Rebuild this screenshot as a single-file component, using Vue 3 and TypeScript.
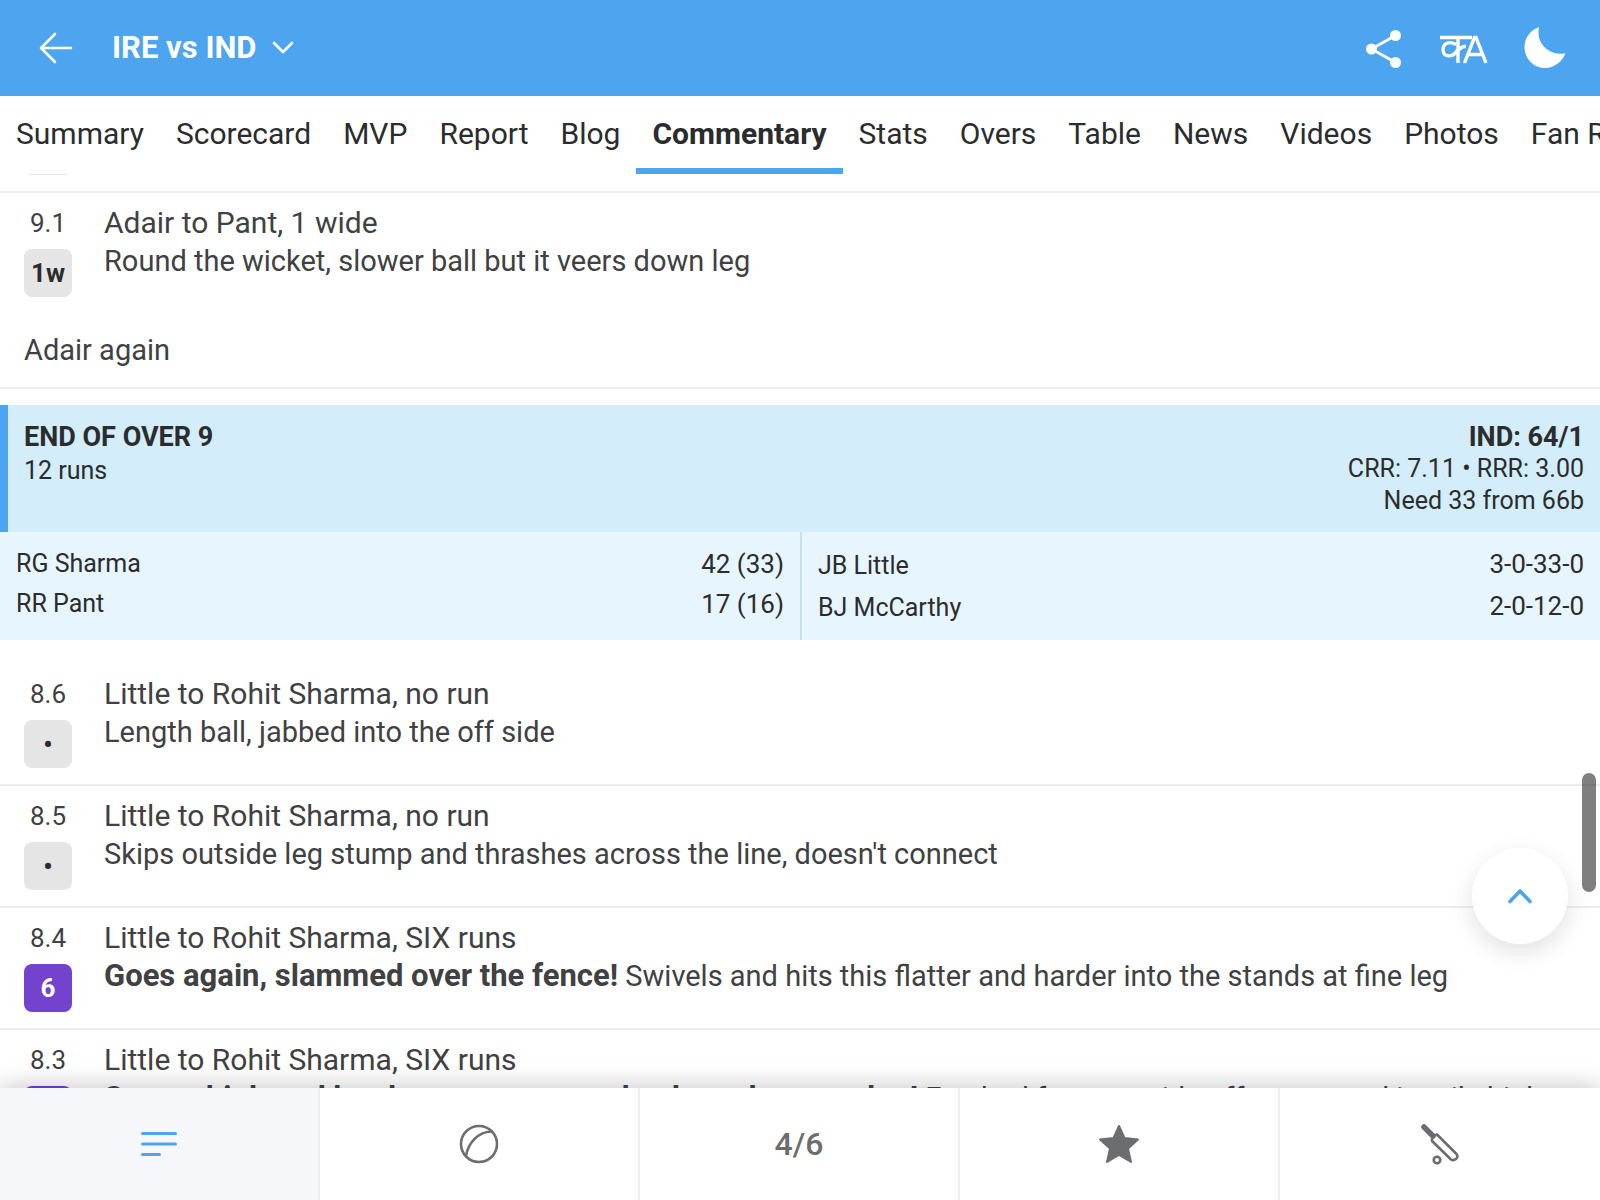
<script setup lang="ts">
import { ref } from 'vue'

interface Delivery {
  over: string
  label: string
  kind: 'plain' | 'six'
  title: string
  lead?: string
  text: string
  note?: string
}

const tabs: string[] = [
  'Summary', 'Scorecard', 'MVP', 'Report', 'Blog', 'Commentary', 'Stats',
  'Overs', 'Table', 'News', 'Videos', 'Photos', 'Fan Ratings',
]
const activeTab = ref('Commentary')

const currentOver: Delivery[] = [
  {
    over: '9.1', label: '1w', kind: 'plain', title: 'Adair to Pant, 1 wide',
    text: 'Round the wicket, slower ball but it veers down leg', note: 'Adair again',
  },
]

const previousOver: Delivery[] = [
  { over: '8.6', label: '•', kind: 'plain', title: 'Little to Rohit Sharma, no run', text: 'Length ball, jabbed into the off side' },
  { over: '8.5', label: '•', kind: 'plain', title: 'Little to Rohit Sharma, no run', text: "Skips outside leg stump and thrashes across the line, doesn't connect" },
  {
    over: '8.4', label: '6', kind: 'six', title: 'Little to Rohit Sharma, SIX runs',
    lead: 'Goes again, slammed over the fence!', text: 'Swivels and hits this flatter and harder into the stands at fine leg',
  },
  {
    over: '8.3', label: '6', kind: 'six', title: 'Little to Rohit Sharma, SIX runs',
    lead: 'Swung high and hard, no sweeper on backward square leg!', text: 'Fetched from outside off stump and it sails high',
  },
]

const batters = [
  { name: 'RG Sharma', figures: '42 (33)' },
  { name: 'RR Pant', figures: '17 (16)' },
]
const bowlers = [
  { name: 'JB Little', figures: '3-0-33-0' },
  { name: 'BJ McCarthy', figures: '2-0-12-0' },
]

const feed = ref<HTMLElement | null>(null)

function toTop(): void {
  feed.value?.scrollTo({ top: 0, behavior: 'smooth' })
}
</script>

<template>
  <div class="app">
    <header class="bar">
      <button class="icon-btn back" aria-label="Back">
        <svg width="34" height="32" viewBox="0 0 34 32" fill="none" stroke="currentColor" stroke-width="2.6" stroke-linecap="round" stroke-linejoin="round">
          <path d="M32 16H2M16 2 2 16l14 14" />
        </svg>
      </button>
      <button class="match">
        <span>IRE vs IND</span>
        <svg width="22" height="14" viewBox="0 0 22 14" fill="none" stroke="currentColor" stroke-width="2.6" stroke-linecap="round" stroke-linejoin="round">
          <path d="m2 2 9 9 9-9" />
        </svg>
      </button>
      <div class="actions">
        <button class="icon-btn" aria-label="Share">
          <svg width="38" height="40" viewBox="0 0 38 40" fill="currentColor">
            <path d="M29.500 7.500 5.500 21l24 13.500" fill="none" stroke="currentColor" stroke-width="2.800" />
            <circle cx="29.500" cy="7.500" r="5.500" /><circle cx="5.500" cy="21" r="5.500" /><circle cx="29.500" cy="34.500" r="5.500" />
          </svg>
        </button>
        <button class="icon-btn" aria-label="Language">
          <svg width="50" height="32" viewBox="0 0 50 32" fill="none" stroke="currentColor" stroke-width="3.400">
            <path d="M1 5.500h32M19 5.500V31M17 12.500c-7-4-13-1-13 5.500 0 8 11 8 15-1M19 19c2-3 4-5 8-4.500" />
            <path d="M25.500 31 35.500 5.500h1.500L47 31M29 22.500h15" />
          </svg>
        </button>
        <button class="icon-btn" aria-label="Dark mode">
          <svg width="42" height="42" viewBox="0 0 42 42" fill="currentColor">
            <path d="M15 .3C6 3.200.500 11 .500 20.500A20.500 20.500 0 0 0 21 41c9 0 17.500-6 20.300-14.700C26 29.500 11.500 17 15 .300z" />
          </svg>
        </button>
      </div>
    </header>

    <nav class="tabs" aria-label="Match sections">
      <a v-for="tab in tabs" :key="tab" href="#" :class="{ active: tab === activeTab }" @click.prevent="activeTab = tab">{{ tab }}</a>
    </nav>

    <main class="stage">
      <div ref="feed" class="feed">
        <div class="passed"><span class="badge plain"></span></div>
        <template v-for="ball in currentOver" :key="ball.over">
          <article class="ball" :class="{ noted: ball.note }">
            <div class="side">
              <span class="over">{{ ball.over }}</span>
              <span class="badge" :class="ball.kind">{{ ball.label }}</span>
            </div>
            <div class="text">
              <p>{{ ball.title }}</p>
              <p class="detail">{{ ball.text }}</p>
            </div>
          </article>
          <p v-if="ball.note" class="note detail">{{ ball.note }}</p>
        </template>

        <section class="over-end">
          <div class="over-head">
            <div>
              <h2>END OF OVER 9</h2>
              <p>12 runs</p>
            </div>
            <div class="score">
              <p class="total">IND: 64/1</p>
              <p>CRR: 7.11 • RRR: 3.00</p>
              <p>Need 33 from 66b</p>
            </div>
          </div>
          <div class="over-body">
            <table class="batting">
              <tbody>
                <tr v-for="b in batters" :key="b.name"><td>{{ b.name }}</td><td>{{ b.figures }}</td></tr>
              </tbody>
            </table>
            <table class="bowling">
              <tbody>
                <tr v-for="b in bowlers" :key="b.name"><td>{{ b.name }}</td><td>{{ b.figures }}</td></tr>
              </tbody>
            </table>
          </div>
        </section>

        <article v-for="ball in previousOver" :key="ball.over" class="ball">
          <div class="side">
            <span class="over">{{ ball.over }}</span>
            <span class="badge" :class="ball.kind">{{ ball.label }}</span>
          </div>
          <div class="text">
            <p>{{ ball.title }}</p>
            <p class="detail"><b v-if="ball.lead">{{ ball.lead }}</b>{{ ball.lead ? ' ' : '' }}{{ ball.text }}</p>
          </div>
        </article>
      </div>
      <div class="thumb"></div>
      <button class="to-top" aria-label="Back to top" @click="toTop">
        <svg width="26" height="18" viewBox="0 0 26 18" fill="none" stroke="currentColor" stroke-width="3.600" stroke-linecap="round" stroke-linejoin="round">
          <path d="M3 14.500 13 4l10 10.500" />
        </svg>
      </button>
    </main>

    <nav class="dock" aria-label="Commentary filters">
      <button class="on" aria-label="All commentary">
        <svg width="38" height="26" viewBox="0 0 38 26" fill="none" stroke="currentColor" stroke-width="3" stroke-linecap="round">
          <path d="M2.500 2.500h33M2.500 13h33M2.500 23.500h17" />
        </svg>
      </button>
      <button aria-label="Wickets">
        <svg width="40" height="40" viewBox="0 0 40 40" fill="none" stroke="currentColor" stroke-width="2.600">
          <circle cx="20" cy="20" r="18" /><path d="M7 32C9 19 19 8 32 7.500" />
        </svg>
      </button>
      <button class="runs">4/6</button>
      <button aria-label="Key moments">
        <svg width="42" height="40" viewBox="0 0 42 40" fill="currentColor" stroke="currentColor" stroke-width="2" stroke-linejoin="round">
          <path d="m21 2 5.500 12 13.500 1.500-10 9 3 13.500-12-7-12 7 3-13.500-10-9L15.500 14z" />
        </svg>
      </button>
      <button aria-label="Full innings">
        <svg width="40" height="42" viewBox="0 0 40 42" fill="none" stroke="currentColor" stroke-width="2.600" stroke-linejoin="round">
          <path d="m4 4 9 9" stroke-width="5.500" stroke-linecap="round" />
          <path d="m12 16 1-3 4-1.500L36.500 31q2 3-.5 5t-5 .5L12 18z" /><circle cx="17" cy="37" r="3.300" />
        </svg>
      </button>
    </nav>
  </div>
</template>

<style>
html,
body,
#app {
  height: 100%;
}
</style>

<style scoped>
.app {
  display: flex;
  flex-direction: column;
  height: 100vh;
  overflow: hidden;
  background: #fff;
  color: #2b2c2d;
  font-family: Roboto, 'Liberation Sans', sans-serif;
  font-size: 30px;
  line-height: 38px;
}
p,
h2 {
  margin: 0;
}
button {
  padding: 0;
  border: 0;
  background: none;
  color: inherit;
  font: inherit;
  cursor: pointer;
}
svg {
  display: block;
}
.bar {
  display: flex;
  flex: none;
  align-items: center;
  height: 96px;
  padding: 0 34px 0 39px;
  background: #4ca5ee;
  color: #fff;
}
.match {
  display: flex;
  align-items: center;
  gap: 16px;
  margin-left: 39px;
  font-size: 31px;
  font-weight: 700;
}
.actions {
  display: flex;
  align-items: center;
  gap: 35px;
  margin-left: auto;
}
.tabs {
  display: flex;
  flex: none;
  height: 78px;
  overflow: hidden;
  background: #fff;
}
.tabs a {
  flex: none;
  box-sizing: border-box;
  padding: 19px 16px 0;
  border-bottom: 6px solid transparent;
  color: inherit;
  text-decoration: none;
  white-space: nowrap;
}
.tabs a.active {
  border-color: #4ca5ee;
  font-weight: 700;
}
.stage {
  position: relative;
  flex: 1;
  min-height: 0;
}
.feed {
  height: 100%;
  overflow-y: auto;
  scrollbar-width: none;
  color: #404142;
}
.passed {
  display: flex;
  align-items: flex-end;
  height: 1px;
  padding: 0 24px 16px;
  overflow: hidden;
  border-bottom: 2px solid #ededee;
}
.passed .badge {
  flex: none;
  width: 48px;
  height: 48px;
}
.ball {
  display: flex;
  gap: 32px;
  padding: 11px 24px 16px;
  border-bottom: 2px solid #ededee;
}
.ball.noted {
  border-bottom: 0;
}
.side {
  display: flex;
  flex: none;
  flex-direction: column;
  gap: 7px;
  width: 48px;
  font-size: 26px;
  text-align: center;
}
.detail {
  font-size: 29px;
}
.detail b {
  font-size: 31px;
}
.badge {
  border-radius: 8px;
  line-height: 48px;
  font-weight: 700;
}
.plain {
  background: #e5e5e5;
  color: #2b2c2d;
}
.six {
  background: #7443ce;
  color: #fff;
}
.note {
  padding: 18px 24px;
  border-bottom: 2px solid #ededee;
}
.over-end {
  margin: 16px 0 24px;
  color: #2b2c2d;
  font-size: 25px;
  line-height: 32px;
}
.over-head {
  display: flex;
  justify-content: space-between;
  padding: 16px 16px 15px;
  border-left: 8px solid #4ca5ee;
  background: #d4edfb;
}
h2,
.total {
  font-size: 27px;
  font-weight: 700;
}
h2 {
  margin-bottom: 2px;
}
.score {
  text-align: right;
}
.over-body {
  display: grid;
  grid-template-columns: 1fr 1fr;
  background: #e7f6fe;
}
.over-body > table {
  width: 100%;
  padding: 16px 16px 8px;
  border-spacing: 0;
}
.bowling {
  border-left: 2px solid #c8dfec;
}
.batting {
  height: fit-content;
}
td {
  padding: 0 0 8px;
  vertical-align: top;
}
td:last-child {
  font-size: 26px;
  text-align: right;
}
.bowling td:first-child {
  padding-bottom: 6px;
  line-height: 36px;
}
.thumb {
  position: absolute;
  top: 599px;
  right: 4px;
  width: 14px;
  height: 119px;
  border-radius: 7px;
  background: rgba(0, 0, 0, 0.5);
}
.to-top {
  position: absolute;
  right: 32px;
  bottom: 144px;
  display: grid;
  place-items: center;
  width: 96px;
  height: 96px;
  border-radius: 50%;
  background: #fff;
  box-shadow: 0 8px 24px rgba(0, 0, 0, 0.12);
  color: #4ca5ee;
}
.dock {
  position: relative;
  display: grid;
  flex: none;
  grid-template-columns: repeat(5, 1fr);
  height: 112px;
  background: #fff;
  box-shadow: 0 0 24px rgba(0, 0, 0, 0.25);
}
.dock button {
  display: grid;
  place-items: center;
  border-right: 2px solid #edeef0;
  color: #6c6d6f;
}
.dock button:last-child {
  border-right: 0;
}
.dock .runs {
  font-size: 32px;
  font-weight: 500;
}
.dock .on {
  background: #f5f7fa;
  color: #4ca5ee;
}
</style>
